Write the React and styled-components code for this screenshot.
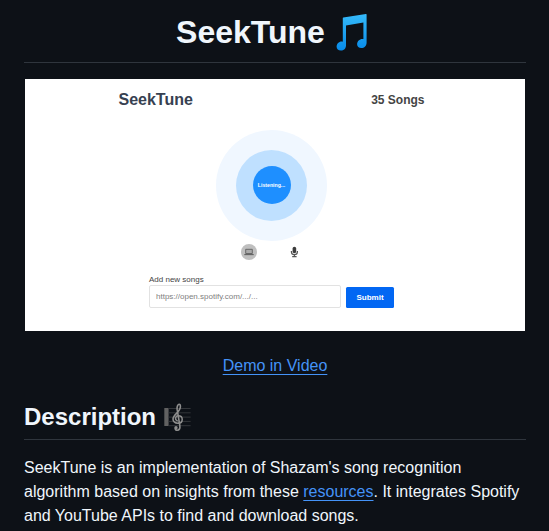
import React from "react";
import styled, { createGlobalStyle } from "styled-components";

const GlobalStyle = createGlobalStyle`
  *, *::before, *::after { box-sizing: border-box; }
  html, body { margin: 0; background: #0d1117; overflow: hidden; }
`;

const Article = styled.article`
  width: 549px;
  height: 531px;
  overflow: hidden;
  padding: 12px 23px 0 24px;
  background: #0d1117;
  color: #f0f6fc;
  font: 16px/24px "Liberation Sans", Arial, sans-serif;
`;

const Heading = styled.h1`
  display: flex;
  align-items: center;
  justify-content: ${(p) => (p.$center ? "center" : "flex-start")};
  gap: ${(p) => p.$gap}px;
  height: ${(p) => p.$height}px;
  margin: 0;
  padding: 0 ${(p) => (p.$center ? 5.5 : 0)}px ${(p) => p.$pad}px 0;
  border-bottom: 1px solid #2f353d;
  font-size: ${(p) => p.$size}px;
  line-height: 1.25;
  font-weight: 700;
`;

const EmojiSvg = styled.svg`
  display: block;
  flex: none;
`;

const Link = styled.a`
  color: #4493f8;
  text-decoration: underline;
  text-underline-offset: 3.2px;
`;

const LinkRow = styled.p`
  margin: 23px 0 24px;
  text-align: center;
`;

const Paragraph = styled.p`
  margin: 16px 0 0;
`;

const Preview = styled.section`
  display: flex;
  flex-direction: column;
  width: 500px;
  height: 252px;
  margin: 16px auto 0;
  background: #fff;
  color: #444;
`;

const PreviewHeader = styled.header`
  display: flex;
  justify-content: space-between;
  align-items: center;
  height: 42px;
  padding: 0 100.5px 0 93.5px;
`;

const Brand = styled.strong`
  color: #374151;
  font-size: 16px;
`;

const SongCount = styled.strong`
  font-size: 12px;
  color: #444;
`;

const Disc = styled.div`
  display: flex;
  flex: none;
  align-items: center;
  justify-content: center;
  width: ${(p) => p.$size}px;
  height: ${(p) => p.$size}px;
  border-radius: 50%;
  background: ${(p) => p.$color};
`;

const Listener = styled.div`
  display: flex;
  justify-content: center;
  margin: 8.5px 7px 0 0;
`;

const ListenLabel = styled.span`
  color: #fff;
  font-size: 5.2px;
  font-weight: 700;
  line-height: 8px;
`;

const Sources = styled.div`
  display: flex;
  align-items: center;
  gap: 30px;
  height: 16px;
  margin: 3px 0 0 216px;
`;

const Form = styled.form`
  display: flex;
  align-items: flex-end;
  gap: 5px;
  margin: 14.5px 0 0 124px;
`;

const Field = styled.label`
  display: flex;
  flex-direction: column;
  width: 192px;
  font-size: 8px;
  line-height: 11px;
  color: #444;
`;

const Input = styled.input`
  width: 192px;
  height: 23px;
  margin: 0;
  padding: 0 6px;
  border: 1px solid #e2e2e2;
  border-radius: 2px;
  background: #fff;
  font: 8px "Liberation Sans", Arial, sans-serif;
  &::placeholder { color: #808080; opacity: 1; }
`;

const Submit = styled.button`
  width: 48px;
  height: 21px;
  margin: 0;
  padding: 0;
  border: 0;
  border-radius: 1.5px;
  background: #0267f3;
  color: #fff;
  font: 700 8px "Liberation Sans", Arial, sans-serif;
`;

const NoteEmoji = () => (
  <EmojiSvg width="32" height="38" viewBox="0 0 32 38">
    <defs>
      <linearGradient id="note" x1="0" y1="0" x2="0" y2="1">
        <stop offset="0" stopColor="#35bafa" />
        <stop offset="1" stopColor="#078be9" />
      </linearGradient>
    </defs>
    <path
      fill="url(#note)"
      d="M6.8 5Q6.8 4.6 7.3 4.5L29.9 1.1q.7-.1.7.5v27.8c0 3.1-2.2 5.6-5.3 5.6-2.5 0-4.2-1.4-4.2-3.7 0-3.3 3.2-6 6.3-5.2V9.4L10 12.6v19.8c0 3.1-2.2 5.2-5.1 5.2-2.6 0-4.3-1.4-4.3-3.8 0-3.3 3.1-5.9 6.2-5Z"
    />
  </EmojiSvg>
);

const ScoreEmoji = () => (
  <EmojiSvg width="28" height="28" viewBox="0 0 28 28">
    <path d="M1.3 5h4.3v18H1.3Z" fill="#616161" />
    <path d="M5.6 5.5h22M5.6 9.8h22M5.6 14.1h22M5.6 18.4h22M5.6 22.7h22" stroke="#33363a" strokeWidth="1" />
    <g fill="none" stroke="#8e8e8e" strokeLinecap="round">
      <path
        strokeWidth="1.6"
        d="M15.2 20.2c-3 .3-5.2-1.5-5.2-4.1 0-4.7 7.4-7 7.4-12.3 0-1.7-.5-2.5-1.2-2.5-1.4 0-2.4 2.4-2.1 4.9l2.7 16.2c.5 3.2-.6 4.8-2.5 4.8-1.2 0-2-.6-2-1.5"
      />
      <path strokeWidth="1.5" d="M14.1 17.6c-2.7-1.3-1.6-4.8 1.1-4.8 2.5 0 4 1.5 4 3.6 0 2.2-1.7 3.8-4 3.8" />
    </g>
    <circle cx="13" cy="24.8" r="1.7" fill="#8e8e8e" />
  </EmojiSvg>
);

const LaptopIcon = () => (
  <EmojiSvg width="10" height="8" viewBox="0 0 10 8">
    <path d="M1.7 1.3h6.6v4.2H1.7Z" fill="#aaa" stroke="#606060" strokeWidth=".9" />
    <path d="M.3 6.6h9.4" stroke="#606060" strokeWidth="1.1" />
  </EmojiSvg>
);

const MicIcon = () => (
  <EmojiSvg width="9" height="12" viewBox="0 0 9 12">
    <rect x="2.6" y=".8" width="3.6" height="6.4" rx="1.8" fill="#3c3c3c" />
    <path d="M1.4 5v.7a3 3 0 0 0 6 0V5M4.4 8.6v2M2.2 10.6h4.4" fill="none" stroke="#555" strokeWidth="1.2" />
  </EmojiSvg>
);

export default function App() {
  return (
    <>
      <GlobalStyle />
      <Article>
        <Heading $center $size={32} $height={51} $pad={10} $gap={11.5}>
          SeekTune
          <NoteEmoji />
        </Heading>
        <Preview>
          <PreviewHeader>
            <Brand>SeekTune</Brand>
            <SongCount>35 Songs</SongCount>
          </PreviewHeader>
          <Listener>
            <Disc $size={111} $color="#f0f7ff">
              <Disc $size={71} $color="#bfe0ff">
                <Disc $size={38} $color="#1e8fff">
                  <ListenLabel>Listening...</ListenLabel>
                </Disc>
              </Disc>
            </Disc>
          </Listener>
          <Sources>
            <Disc $size={16} $color="#bfbfbf">
              <LaptopIcon />
            </Disc>
            <Disc $size={15} $color="#fff">
              <MicIcon />
            </Disc>
          </Sources>
          <Form>
            <Field>
              Add new songs
              <Input placeholder="https://open.spotify.com/.../..." />
            </Field>
            <Submit type="button">Submit</Submit>
          </Form>
        </Preview>
        <LinkRow>
          <Link>Demo in Video</Link>
        </LinkRow>
        <Heading as="h2" $size={24} $height={38} $pad={7} $gap={7}>
          Description
          <ScoreEmoji />
        </Heading>
        <Paragraph>
          SeekTune is an implementation of Shazam's song recognition algorithm based on insights from these{" "}
          <Link>resources</Link>. It integrates Spotify and YouTube APIs to find and download songs.
        </Paragraph>
      </Article>
    </>
  );
}
